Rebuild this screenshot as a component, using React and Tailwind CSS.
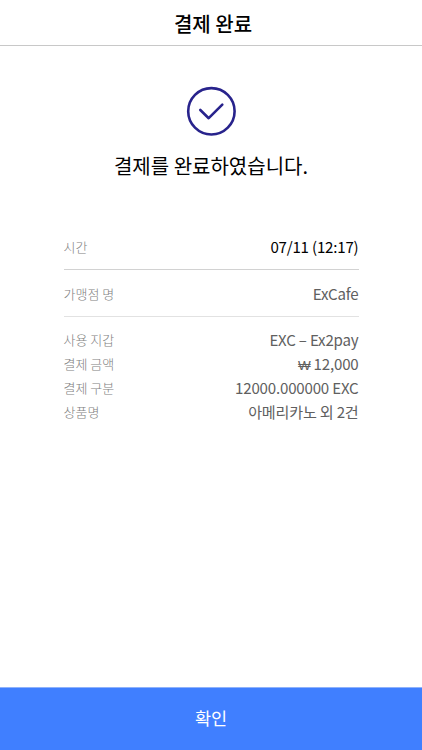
const rows = [
  ['사용 지갑', 'EXC – Ex2pay'],
  ['결제 금액', <><span className="font-['Liberation_Sans',sans-serif] text-[13.5px] leading-none">₩</span> 12,000</>],
  ['결제 구분', '12000.000000 EXC'],
  ['상품명', '아메리카노 외 2건'],
];

function Row({ label, value, className = '' }) {
  return (
    <div className={`flex items-center justify-between ${className}`}>
      <span className="text-[13px] leading-5 font-light text-[#808080]">{label}</span>
      <span className="pb-0.5 text-[15.1px] leading-5 tracking-[-0.2px]">{value}</span>
    </div>
  );
}

export default function App() {
  return (
    <div className="flex h-screen flex-col overflow-hidden bg-white font-['Noto_Sans_CJK_KR',sans-serif] text-black">
      <header className="flex h-[46px] shrink-0 items-center justify-center border-b border-[#c8c8c8] pl-1 pt-0.5">
        <h1 className="text-[20px] font-medium leading-6">결제 완료</h1>
      </header>
      <main className="flex grow flex-col items-center pt-10">
        <svg width="50" height="50" viewBox="0 0 50 50" fill="none" stroke="#28238c" strokeWidth="2.6">
          <circle cx="25.4" cy="25.3" r="23.2" />
          <path d="M14.3 24L22.7 32.2L36.3 18.6" strokeLinecap="round" strokeLinejoin="round" />
        </svg>
        <p className="mt-4 text-[20px] leading-7">결제를 완료하였습니다.</p>
        <section className="mt-11 w-[295px] text-[#606060]">
          <Row label="시간" value="07/11 (12:17)" className="h-[46px] border-b border-[#d2d2d2] text-black" />
          <Row label="가맹점 명" value="ExCafe" className="h-[47px] border-b border-[#e2e2e2] pt-px" />
          <div className="pt-[11px]">
            {rows.map(([label, value]) => (
              <Row key={label} label={label} value={value} className="h-6" />
            ))}
          </div>
        </section>
      </main>
      <button className="h-[63px] shrink-0 border-t border-[#8fb2fb] bg-[#407fff] pb-0.5 text-[17.5px] text-white">확인</button>
    </div>
  );
}
